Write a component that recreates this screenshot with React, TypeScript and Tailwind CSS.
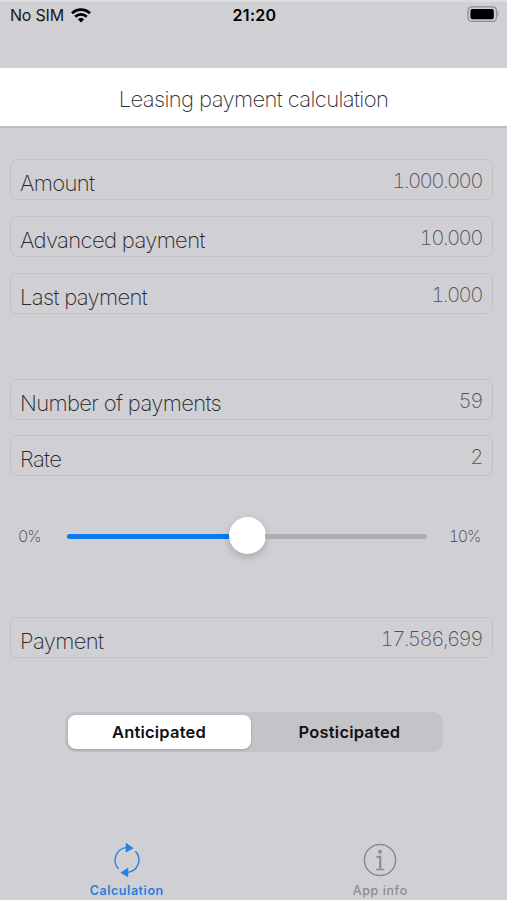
interface FieldProps {
  label: string;
  value: string;
  className?: string;
}

function Field({ label, value, className = '' }: FieldProps) {
  return (
    <div
      className={`flex h-[41px] items-center justify-between rounded-[7px] border border-[#c2c1c6] pr-[10px] pl-[9px] font-extralight ${className}`}
    >
      <span className="pt-[6px] text-[22px] leading-none tracking-[-0.65px] text-[#27272a]">{label}</span>
      <span className="pt-[3px] text-[20.5px] leading-none tracking-[-1.55px] text-[#505055] tabular-nums">{value}</span>
    </div>
  );
}

function StatusBar() {
  return (
    <div className="flex h-[68px] items-start justify-between border-t-2 border-[#dddce1] pr-2 pl-[10px] text-black">
      <div className="flex w-[90px] items-center gap-[7px] pt-[4px]">
        <span className="text-[16px] leading-[18px] whitespace-nowrap tracking-[-0.2px] text-[#161618]">No SIM</span>
        <svg width="20" height="15" viewBox="0 0 20 15" fill="none" stroke="#000" strokeWidth="2.7">
          <path d="M1 5.3C6 .3 14 .3 19 5.3" />
          <path d="M4.2 8.8C7.5 5.6 12.5 5.6 15.8 8.8" />
          <path d="M10 14.5 6.8 11.3C8.6 9.7 11.4 9.7 13.2 11.3Z" fill="#000" stroke="none" />
        </svg>
      </div>
      <span className="pt-[4px] text-[16px] leading-[18px] font-semibold tracking-[0.3px]">21:20</span>
      <div className="flex w-[90px] justify-end pt-1">
        <svg width="33" height="16" viewBox="0 0 33 16">
          <rect x="2" y="0.8" width="28.5" height="14.6" rx="4" fill="none" stroke="#8f8e93" strokeWidth="1.3" />
          <rect x="4.4" y="3" width="23.4" height="10.2" rx="2" fill="#000" />
          <path d="M31.7 5.8C33 6.6 33 9.4 31.7 10.2Z" fill="#8f8e93" />
        </svg>
      </div>
    </div>
  );
}

function RateSlider() {
  return (
    <div className="mt-[40px] flex h-[40px] items-center pr-[27px] pl-[18px] text-[16px] font-extralight tracking-[-1.2px] text-[#3c3c40] tabular-nums">
      <span className="w-[49px]">0%</span>
      <div className="flex w-[360px] items-center">
        <div className="h-[5px] w-[163px] rounded-l-full bg-[#0a7aed]" />
        <div className="-mx-[1px] -mt-[2px] size-[37px] shrink-0 rounded-full bg-white shadow-[0_3px_8px_rgba(0,0,0,0.2)]" />
        <div className="h-[5px] flex-1 rounded-r-full bg-[#adadb1]" />
      </div>
      <span className="flex-1 text-right">10%</span>
    </div>
  );
}

function SegmentedControl() {
  return (
    <div className="mx-auto mt-[54px] flex h-[40px] w-[378px] rounded-[10px] bg-[#c4c3c8] p-[3px] text-[16.5px] font-semibold tracking-[0.2px] text-[#111113]">
      <div className="flex w-[183px] items-center justify-center rounded-[8px] bg-white shadow-[0_1px_3px_rgba(0,0,0,0.2)]">
        Anticipated
      </div>
      <div className="flex flex-1 items-center justify-center pl-[9px]">Posticipated</div>
    </div>
  );
}

function TabBar() {
  return (
    <div className="mt-[90px] flex h-[58px] text-[12.5px] leading-[15px]">
      <div className="flex w-1/2 flex-col items-center text-[#2580e3]">
        <svg width="36" height="36" viewBox="0 0 36 36" fill="none" stroke="currentColor" strokeWidth="1.4">
          <path d="M9.6 26.8A12.6 12.6 0 0 1 17 5.6" />
          <path d="M26.4 9.2A12.6 12.6 0 0 1 19 30.4" />
          <path d="M16.8 .8V10.6L24.6 6.2ZM19.2 25.4V35.2L11.4 30.8Z" fill="currentColor" stroke="none" />
        </svg>
        <span className="mt-[5px] font-semibold tracking-[0.55px]">Calculation</span>
      </div>
      <div className="flex w-1/2 flex-col items-center text-[#8d8c91]">
        <svg width="36" height="36" viewBox="0 0 36 36" fill="none" stroke="currentColor">
          <circle cx="18" cy="18" r="15.6" strokeWidth="1.5" />
          <circle cx="18" cy="9.8" r="2" fill="currentColor" stroke="none" />
          <path d="M14.5 14.8H18.2V27" strokeWidth="2.2" />
          <path d="M14 27.6H22.3" strokeWidth="1.5" />
        </svg>
        <span className="mt-[5px] font-medium tracking-[0.6px]">App info</span>
      </div>
    </div>
  );
}

export default function App() {
  return (
    <div className="flex h-[900px] w-[507px] flex-col overflow-hidden bg-[#d0cfd4] font-['Inter',sans-serif]">
      <StatusBar />
      <header className="flex h-[60px] items-center justify-center border-b-2 border-[#bcbbc0] bg-white pt-[4px] text-[22px] font-extralight tracking-[-0.62px] text-[#303033]">
        Leasing payment calculation
      </header>
      <main className="flex flex-col pr-[14px] pl-[10px]">
        <Field label="Amount" value="1.000.000" className="mt-[31px]" />
        <Field label="Advanced payment" value="10.000" className="mt-[16px]" />
        <Field label="Last payment" value="1.000" className="mt-[16px]" />
        <Field label="Number of payments" value="59" className="mt-[65px]" />
        <Field label="Rate" value="2" className="mt-[15px]" />
      </main>
      <RateSlider />
      <div className="mt-[61px] pr-[14px] pl-[10px]">
        <Field label="Payment" value="17.586,699" />
      </div>
      <SegmentedControl />
      <TabBar />
    </div>
  );
}
